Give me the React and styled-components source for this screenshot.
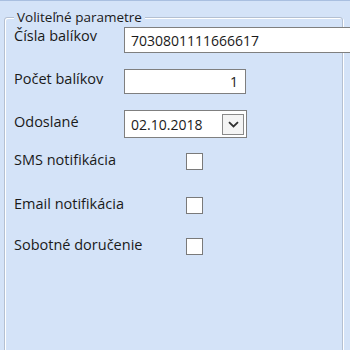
import styled, { createGlobalStyle } from 'styled-components'

const GlobalStyle = createGlobalStyle`
    html, body {
        margin: 0;
        padding: 0;
        background: #d4e3f8;
        overflow: hidden;
    }
    * {
        box-sizing: border-box;
    }
`

const App = () => {
    return (
        <Page>
            <GlobalStyle />
            <GroupBox>
                <Title>Voliteľné parametre</Title>
                <Row $top={9} $height={26}>
                    <Label $offset={1}>Čísla balíkov</Label>
                    <TextInput $width={240} defaultValue="7030801111666617" />
                </Row>
                <Row $top={16} $height={25}>
                    <Label $offset={2}>Počet balíkov</Label>
                    <TextInput $width={122} $right defaultValue="1" />
                </Row>
                <Row $top={16} $height={28}>
                    <Label $offset={4}>Odoslané</Label>
                    <DateBox>
                        <DateText>02.10.2018</DateText>
                        <DropButton>
                            <svg width="11" height="7" viewBox="0 0 11 7">
                                <path d="M1 1.2 L5.5 5.5 L10 1.2" fill="none" stroke="#303030" strokeWidth="1.8" />
                            </svg>
                        </DropButton>
                    </DateBox>
                </Row>
                <CheckRow $top={15}>
                    <Label $offset={-1}>SMS notifikácia</Label>
                    <CheckBox />
                </CheckRow>
                <CheckRow $top={27}>
                    <Label $offset={-1}>Email notifikácia</Label>
                    <CheckBox />
                </CheckRow>
                <CheckRow $top={24}>
                    <Label $offset={-1}>Sobotné doručenie</Label>
                    <CheckBox />
                </CheckRow>
            </GroupBox>
        </Page>
    )
}

const Page = styled.div`
    width: 350px;
    height: 350px;
    overflow: hidden;
    border-top: 1px solid #a9bfe0;
    padding: 16px 0 0 4px;
    font-family: "Open Sans", "Noto Sans", sans-serif;
    font-size: 14.5px;
    color: #1a1a1a;
`

const GroupBox = styled.div`
    position: relative;
    width: 339px;
    height: 340px;
    border: 1px solid #b4c0d2;
    border-radius: 3px;
    box-shadow: inset 1px 1px 0 #ffffff, 1px 1px 0 #ffffff;
    padding: 0 0 0 9px;
`

const Title = styled.div`
    position: absolute;
    top: -9px;
    left: 9px;
    padding: 0 3px;
    background: #d4e3f8;
    font-size: 13.5px;
    line-height: 16px;
`

const Row = styled.div`
    display: flex;
    align-items: flex-start;
    height: ${p => p.$height}px;
    margin-top: ${p => p.$top}px;
`

const CheckRow = styled.div`
    display: flex;
    align-items: flex-start;
    height: 17px;
    margin-top: ${p => p.$top}px;
`

const Label = styled.div`
    flex: 0 0 110px;
    min-width: 0;
    line-height: 16px;
    margin-top: ${p => p.$offset || 0}px;
    white-space: nowrap;
`

const TextInput = styled.input`
    flex: 0 0 auto;
    width: ${p => p.$width}px;
    height: 100%;
    border: 1px solid #7f7f7f;
    background: #ffffff;
    font-family: "Open Sans", "Noto Sans", sans-serif;
    font-size: 14px;
    color: #1a1a1a;
    padding: 0 7px 0 6px;
    text-align: ${p => (p.$right ? 'right' : 'left')};
    outline: none;
`

const DateBox = styled.div`
    width: 123px;
    height: 100%;
    display: flex;
    align-items: center;
    justify-content: space-between;
    border: 1px solid #7f7f7f;
    background: #ffffff;
    padding: 0 2px 0 6px;
`

const DateText = styled.span`
    font-size: 14px;
`

const DropButton = styled.div`
    width: 22px;
    height: 21px;
    display: flex;
    align-items: center;
    justify-content: center;
    border: 1px solid #8a8a8a;
    background: #f4f4f4;
`

const CheckBox = styled.div`
    width: 17px;
    height: 17px;
    margin-left: 62px;
    border: 1px solid #7a7a7a;
    background: #ffffff;
`

export default App
